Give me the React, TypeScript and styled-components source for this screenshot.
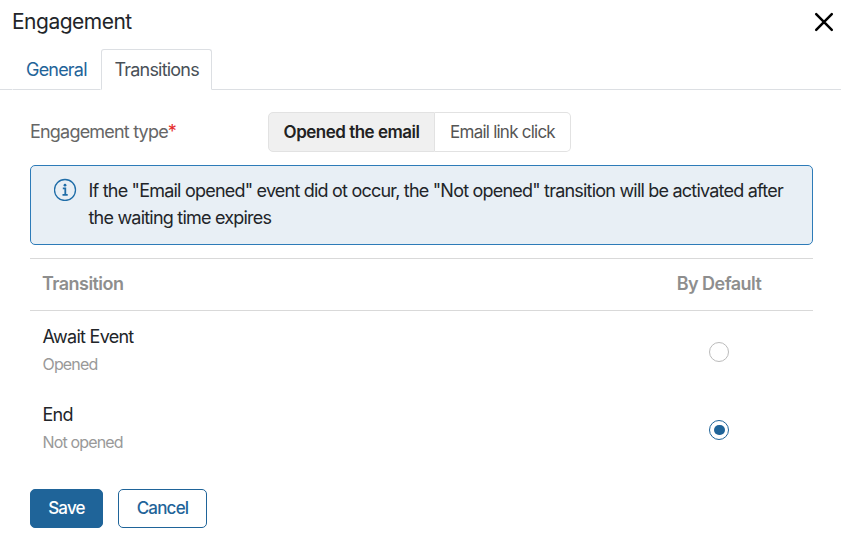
import React from "react";
import styled, { createGlobalStyle } from "styled-components";

const Global = createGlobalStyle`
  *{box-sizing:border-box}
  body{margin:0;background:#fff;font-family:Inter,"Liberation Sans",sans-serif;color:#222529;overflow:hidden}
  button{font-family:inherit;margin:0}
`;
const Dialog = styled.main`width:841px;height:533px;background:#fff;`;
const Header = styled.header`height:49px;display:flex;justify-content:space-between;padding:8px 7px 0 12px;`;
const Title = styled.h1`margin:0;font-size:21px;line-height:27px;font-weight:400;letter-spacing:-.5px;`;
const Close = styled.button`border:0;background:none;padding:4px 0 0;height:24px;width:20px;`;
const Tabs = styled.nav`display:flex;height:41px;border-bottom:1px solid #dcdfe3;padding-left:12px;`;
const Tab = styled.button<{ $active?: boolean }>`
  height:41px;width:${p => p.$active ? 111 : 89}px;padding:0 0 0 ${p => p.$active ? 12.5 : 13}px;text-align:left;
  font-size:18px;letter-spacing:-.8px;background:#fff;
  border:1px solid ${p => p.$active ? "#dcdfe3" : "transparent"};
  border-bottom-color:${p => p.$active ? "#fff" : "#dcdfe3"};
  border-radius:${p => p.$active ? "3px 3px 0 0" : "0"};color:${p => p.$active ? "#495057" : "#1f6499"};
`;
const Content = styled.section`padding:22px 28px 0 30px;`;
const Field = styled.div`display:flex;height:40px;align-items:center;`;
const Label = styled.label`width:238px;font-size:18px;line-height:22px;padding-bottom:1px;letter-spacing:-.8px;color:#666;`;
const Required = styled.span`color:#e52b2b;`;
const Segments = styled.div`display:flex;`;
const Segment = styled.button<{ $active?: boolean }>`
  height:40px;width:${p => p.$active ? 167 : 136}px;padding:0;font-size:17px;
  letter-spacing:${p => p.$active ? -.5 : -.76}px;
  border:1px solid #e2e2e2;border-left-width:${p => p.$active ? 1 : 0}px;
  border-radius:${p => p.$active ? "5px 0 0 5px" : "0 5px 5px 0"};
  background:${p => p.$active ? "#f0f0f0" : "#fff"};font-weight:${p => p.$active ? 600 : 400};
  color:${p => p.$active ? "#222" : "#555"};
`;
const Notice = styled.div`
  display:flex;margin-top:13px;height:80px;border:1px solid #2d7bb8;border-radius:5px;background:#e8eff5;
  padding:11px 20px 0 23px;
`;
const InfoIcon = styled.svg`width:23px;height:23px;margin-top:1px;flex:none;`;
const NoticeText = styled.p`margin:0 0 0 11.5px;font-size:18px;line-height:27px;letter-spacing:-.79px;white-space:nowrap;`;
const Table = styled.div`margin-top:13px;`;
const Columns = styled.div`
  height:53px;border-top:1px solid #d9d9d9;border-bottom:1px solid #d9d9d9;display:grid;
  grid-template-columns:1fr 188px;align-items:center;padding:0 0 2px 12px;color:#8e8e8e;font-weight:600;
  font-size:18px;letter-spacing:-.54px;
`;
const Centered = styled.span`display:flex;justify-content:center;`;
const Row = styled.div`height:78px;display:grid;grid-template-columns:1fr 188px;padding:12px 0 0 12.5px;`;
const Name = styled.div`font-size:18px;line-height:28px;letter-spacing:-.72px;`;
const Detail = styled.div`font-size:16px;line-height:26px;letter-spacing:-.85px;color:#999;`;
const Radio = styled.span<{ $checked?: boolean }>`
  display:flex;align-items:center;justify-content:center;
  width:20px;height:20px;border:1px solid ${p => p.$checked ? "#1f6499" : "#bbb"};border-radius:50%;margin-top:19px;
  background:#fff;
`;
const RadioDot = styled.span`width:11px;height:10px;border-radius:5px;background:#1f6499;`;
const Actions = styled.footer`display:flex;gap:15px;margin-top:22px;`;
const Action = styled.button<{ $primary?: boolean }>`
  width:${p => p.$primary ? 73 : 89}px;height:39px;border:1px solid #1f6499;border-radius:5px;padding:0 0 1px;
  background:${p => p.$primary ? "#1f6499" : "#fff"};color:${p => p.$primary ? "#fff" : "#1f6499"};
  font-size:17px;letter-spacing:-.8px;font-weight:500;
`;
export default function App() {
  return <><Global /><Dialog>
    <Header><Title>Engagement</Title><Close aria-label="Close"><svg width="20" height="20" viewBox="0 0 20 20"><path d="M2.2 2.2 17.8 17.8M17.8 2.2 2.2 17.8" stroke="#000" strokeWidth="2.5" strokeLinecap="round" /></svg></Close></Header>
    <Tabs><Tab>General</Tab><Tab $active>Transitions</Tab></Tabs>
    <Content>
      <Field><Label>Engagement type<Required>*</Required></Label><Segments><Segment $active>Opened the email</Segment><Segment>Email link click</Segment></Segments></Field>
      <Notice><InfoIcon viewBox="0 0 23 23"><circle cx="11" cy="12" r="10.5" fill="none" stroke="#1f6da8" strokeWidth="1.3" /><circle cx="11" cy="7.2" r="1.4" fill="#1f6da8" /><path d="M8.8 10.4h2.5v6.2M8.5 16.8h5.2" fill="none" stroke="#1f6da8" strokeWidth="1.8" /></InfoIcon><NoticeText>If the "Email opened" event did ot occur, the "Not opened" transition will be activated after<br />the waiting time expires</NoticeText></Notice>
      <Table><Columns><span>Transition</span><Centered>By Default</Centered></Columns>
        <Row><div><Name>Await Event</Name><Detail>Opened</Detail></div><Centered><Radio /></Centered></Row>
        <Row><div><Name>End</Name><Detail>Not opened</Detail></div><Centered><Radio $checked><RadioDot /></Radio></Centered></Row>
      </Table>
      <Actions><Action $primary>Save</Action><Action>Cancel</Action></Actions>
    </Content>
  </Dialog></>;
}
